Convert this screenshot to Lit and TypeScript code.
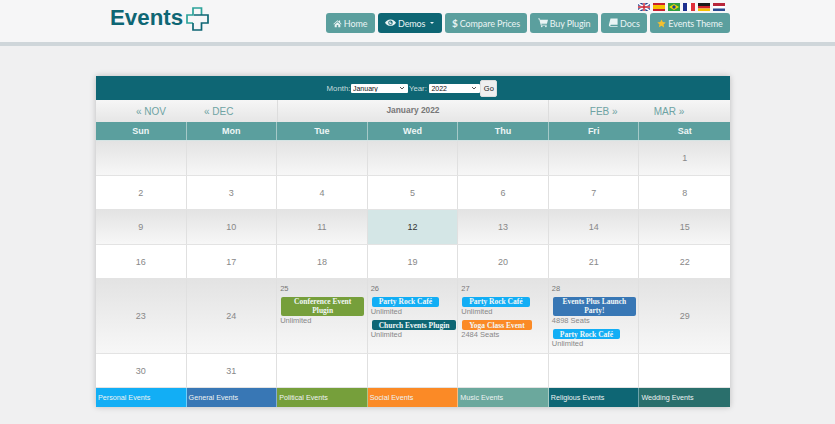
import { LitElement, html, css, svg } from "lit";
import { customElement } from "lit/decorators.js";

type Ev = { t: string; c: string; s: string };
type Cell = { d?: number; today?: boolean; events?: Ev[] };

const party: Ev = { t: "Party Rock Café", c: "#12aef5", s: "Unlimited" };
const rows: { h: string; cells: Cell[] }[] = [
  { h: "r35 grey", cells: [{}, {}, {}, {}, {}, {}, { d: 1 }] },
  { h: "r34 white", cells: [2, 3, 4, 5, 6, 7, 8].map((d) => ({ d })) },
  { h: "r35 grey", cells: [9, 10, 11, 12, 13, 14, 15].map((d) => ({ d, today: d === 12 })) },
  { h: "r34 white", cells: [16, 17, 18, 19, 20, 21, 22].map((d) => ({ d })) },
  {
    h: "r75 grey",
    cells: [
      { d: 23 },
      { d: 24 },
      { d: 25, events: [{ t: "Conference Event Plugin", c: "#769f3b", s: "Unlimited" }] },
      { d: 26, events: [party, { t: "Church Events Plugin", c: "#0e6674", s: "Unlimited" }] },
      { d: 27, events: [party, { t: "Yoga Class Event", c: "#fb8a26", s: "2484 Seats" }] },
      { d: 28, events: [{ t: "Events Plus Launch Party!", c: "#3877b5", s: "4898 Seats" }, party] },
      { d: 29 },
    ],
  },
  { h: "r34 white", cells: [{ d: 30 }, { d: 31 }, {}, {}, {}, {}, {}] },
];

const legend = [
  ["Personal Events", "#12aef5"],
  ["General Events", "#3877b5"],
  ["Political Events", "#769f3b"],
  ["Social Events", "#fb8a26"],
  ["Music Events", "#6ba89d"],
  ["Religious Events", "#0e6674"],
  ["Wedding Events", "#2a6f6c"],
];

const icon = (vb: string, d: ReturnType<typeof svg>, w = 9) =>
  html`<svg class="ic" style="width:${w}px" viewBox=${vb} fill="currentColor">${d}</svg>`;

const home = icon("0 0 24 24", svg`<path d="M12 3 1 13l1.500 1.600L12 6l9.500 8.600L23 13l-4-3.600V4h-3v2.700zM4.500 15.500V22H10v-6h4v6h5.500v-6.500L12 8.700z"/>`);
const eye = icon("0 0 24 16", svg`<path fill-rule="evenodd" d="M12 1C6.500 1 2.500 4.500 0 8c2.500 3.500 6.500 7 12 7s9.500-3.500 12-7c-2.500-3.500-6.500-7-12-7zm0 2.200a4.800 4.800 0 1 1 0 9.600 4.800 4.800 0 0 1 0-9.600zM12 5a3 3 0 1 0 3 3h-3z"/>`, 11);
const cart = icon("0 0 24 22", svg`<path d="M0 1h4.500l.7 3H24l-2.500 10H8l.5 2H21v2H6.800L3 3H0z"/><circle cx="9" cy="20" r="2"/><circle cx="19" cy="20" r="2"/>`, 10);
const book = icon("0 0 24 22", svg`<path d="M6 1h17v15H7c-2 0-2 3 0 3h16v2H6c-2.500 0-4-1.500-4-3.500 0-1 .2-1.600.5-2.500z"/>`, 10);
const star = icon("0 0 24 24", svg`<path d="m12 1 3.400 7.300 7.900 1-5.800 5.500 1.500 7.900L12 18l-7 3.700 1.500-7.900L.7 9.300l7.900-1z" fill="#f4c02e"/>`);

const flags = [
  svg`<rect width="12" height="8" fill="#27408b"/><path d="M0 0l12 8M12 0 0 8" stroke="#fff" stroke-width="1.600"/><path d="M6 0v8M0 4h12" stroke="#fff" stroke-width="2.600"/><path d="M6 0v8M0 4h12" stroke="#c8202f" stroke-width="1.400"/>`,
  svg`<rect width="12" height="8" fill="#c8202f"/><rect y="2" width="12" height="4" fill="#f6c100"/>`,
  svg`<rect width="12" height="8" fill="#2f9e41"/><path d="M6 1 11 4 6 7 1 4z" fill="#f6d900"/><circle cx="6" cy="4" r="1.700" fill="#1d3f8f"/>`,
  svg`<rect width="4" height="8" fill="#1d2f8f"/><rect x="4" width="4" height="8" fill="#fff"/><rect x="8" width="4" height="8" fill="#e0303a"/>`,
  svg`<rect width="12" height="3" fill="#1a1a1a"/><rect y="3" width="12" height="2.500" fill="#d0202a"/><rect y="5.500" width="12" height="2.500" fill="#f6c100"/>`,
  svg`<rect width="12" height="3" fill="#b8263a"/><rect y="3" width="12" height="2.500" fill="#fff"/><rect y="5.500" width="12" height="2.500" fill="#2a4a8f"/>`,
];

@customElement("app-root")
export class AppRoot extends LitElement {
  static styles = css`
    :host { display: block; min-height: 424px; background: #f0f0f1; font-family: "Liberation Sans", Arial, sans-serif; }
    .top { height: 42px; background: #f6f6f7; border-bottom: 4px solid #cfd6da; display: flex; justify-content: space-between; padding: 0 105px 0 110px; }
    .logo { display: flex; align-items: flex-start; gap: 2.500px; padding-top: 3.500px; }
    .logo span { font: bold 22.300px/28px "Liberation Sans", sans-serif; color: #0e6674; }
    .logo svg { width: 23px; height: 24px; margin-top: 3.500px; }
    .right { display: flex; flex-direction: column; align-items: flex-end; padding-top: 3px; }
    .flags { display: flex; gap: 3px; padding-right: 5px; height: 10px; }
    .flags svg { width: 12px; height: 8px; display: block; }
    nav { display: flex; gap: 3px; }
    nav a { height: 20px; box-sizing: border-box; display: flex; align-items: center; gap: 2px; padding: 0 7.300px; background: #5b9f9e; color: #eaf4f4; border-radius: 3px; font: 9px "Lato", sans-serif; letter-spacing: -.1px; white-space: nowrap; }
    nav a.on { background: #0e6674; }
    nav b { font-size: 10px; }
    .ic { display: block; height: auto; flex: none; }
    .caret { width: 0; height: 0; border: 2.500px solid transparent; border-top-color: currentColor; border-bottom: 0; margin-left: 3px; }
    main { padding: 30px 0 17px 96px; }
    .cal { width: 634px; box-shadow: 0 0 6px rgba(0,0,0,.22); background: #fff; }
    .bar { height: 24px; background: #0e6674; color: #c9dedf; display: flex; justify-content: center; align-items: center; font-size: 7.800px; padding-right: 2px; }
    .bar label { display: flex; align-items: center; gap: 0.500px; }
    .bar select { appearance: none; width: 57px; height: 9px; font: 7px "Liberation Sans", sans-serif; border: 0; border-radius: 1px; padding: 0 0 0 2px; margin: 0; color: #111; background: #fff url("data:image/svg+xml,%3Csvg xmlns='http://www.w3.org/2000/svg' width='6' height='4'%3E%3Cpath d='M1 1l2 2 2-2' fill='none' stroke='%23555'/%3E%3C/svg%3E") no-repeat right 3px center; }
    .bar .y { margin-left: 1px; gap: 2.500px; }
    .bar .y select { width: 51px; }
    .go { width: 17px; height: 17px; margin-left: 0; padding: 0; border: 1px solid #ddd; border-radius: 2px; background: #efefef; color: #222; font: 7.500px "Liberation Sans", sans-serif; }
    .navrow { display: grid; grid-template-columns: 2fr 3fr 2fr; height: 22px; background: linear-gradient(#f6f6f6, #e6e6e6); }
    .navrow > div { display: flex; align-items: center; }
    .mid { border-left: 1px solid #ddd; border-right: 1px solid #ddd; justify-content: center; font: bold 8.400px "Liberation Sans", sans-serif; color: #777; padding-bottom: 2px; }
    .nl a, .nr a { font-size: 10px; color: #6ea3a3; }
    .nl a:first-child { margin-left: 40px; }
    .nl a:last-child { margin-left: 38px; }
    .nr a:first-child { margin-left: 41px; }
    .nr a:last-child { margin-left: 36px; }
    .grid7 { display: grid; grid-template-columns: repeat(7, 1fr); }
    .head { height: 19px; background: #5b9f9e; border-bottom: 1px solid #d5e4e4; box-sizing: border-box; }
    .head div { display: flex; align-items: center; justify-content: center; color: #eef6f6; font: bold 9px "Liberation Sans", sans-serif; border-right: 1px solid #a5c9c8; }
    .head div:last-child { border-right: 0; }
    .r35 { height: 35px; } .r34 { height: 34px; } .r75 { height: 75px; }
    .row { border-bottom: 1px solid #e3e3e3; box-sizing: border-box; }
    .grey { background: linear-gradient(#e3e3e3, #f7f7f7); }
    .white { background: #fff; }
    .c { border-right: 1px solid #e0e0e0; display: flex; align-items: center; justify-content: center; color: #888; font-size: 9px; min-width: 0; }
    .c:last-child { border-right: 0; }
    .c.today { background: #d4e6e6; color: #333; }
    .c.ev { display: block; padding: 5px 3px 0; color: #777; font-size: 7.500px; }
    .num { line-height: 9px; margin-bottom: 3.500px; }
    .pill { width: fit-content; white-space: nowrap; box-sizing: border-box; margin: 0 0 0 1px; padding: .5px 7px; border-radius: 2px; color: #f2f7f7; font: bold 7.500px/9px "Liberation Serif", serif; text-align: center; }
    .pill.wide { width: 83px; white-space: normal; padding: .5px 6px; }
    .seat { font-size: 7.500px; line-height: 10px; height: 10px; margin: 0 0 3.500px; color: #888; }
    .legend { height: 19px; }
    .legend div { color: #eef3f3; font-size: 7.200px; display: flex; align-items: center; padding-left: 2px; border-right: 1px solid rgba(255,255,255,.4); }
    .legend div:last-child { border-right: 0; }
  `;

  render() {
    return html`
      <div class="top">
        <div class="logo">
          <span>Events</span>
          <svg viewBox="0 0 23 24" fill="none">
            <path d="M7 16H1V8h6V1h8.500v7" stroke="#2ca39a" stroke-width="1.700" />
            <path d="M8 8h14v8h-6.500v7H7v-7" stroke="#0e6674" stroke-width="1.700" />
          </svg>
        </div>
        <div class="right">
          <div class="flags">${flags.map((f) => html`<svg viewBox="0 0 12 8">${f}</svg>`)}</div>
          <nav>
            <a>${home}Home</a>
            <a class="on">${eye}Demos<span class="caret"></span></a>
            <a><b>$</b>Compare Prices</a>
            <a>${cart}Buy Plugin</a>
            <a>${book}Docs</a>
            <a>${star}Events Theme</a>
          </nav>
        </div>
      </div>
      <main>
        <div class="cal">
          <div class="bar">
            <label>Month: <select><option>January</option></select></label>
            <label class="y">Year: <select><option>2022</option></select></label>
            <button class="go">Go</button>
          </div>
          <div class="navrow">
            <div class="nl"><a>« NOV</a><a>« DEC</a></div>
            <div class="mid">January 2022</div>
            <div class="nr"><a>FEB »</a><a>MAR »</a></div>
          </div>
          <div class="grid7 head">
            ${["Sun", "Mon", "Tue", "Wed", "Thu", "Fri", "Sat"].map((d) => html`<div>${d}</div>`)}
          </div>
          ${rows.map(
            (r) => html`<div class="grid7 row ${r.h}">
              ${r.cells.map((c) =>
                c.events
                  ? html`<div class="c ev">
                      <div class="num">${c.d}</div>
                      ${c.events.map(
                        (e) => html`<div class="pill ${e.t.length > 22 ? "wide" : ""}" style="background:${e.c}">${e.t}</div>
                          <div class="seat">${e.s}</div>`
                      )}
                    </div>`
                  : html`<div class="c ${c.today ? "today" : ""}">${c.d ?? ""}</div>`
              )}
            </div>`
          )}
          <div class="grid7 legend">
            ${legend.map(([t, c]) => html`<div style="background:${c}">${t}</div>`)}
          </div>
        </div>
      </main>
    `;
  }
}
